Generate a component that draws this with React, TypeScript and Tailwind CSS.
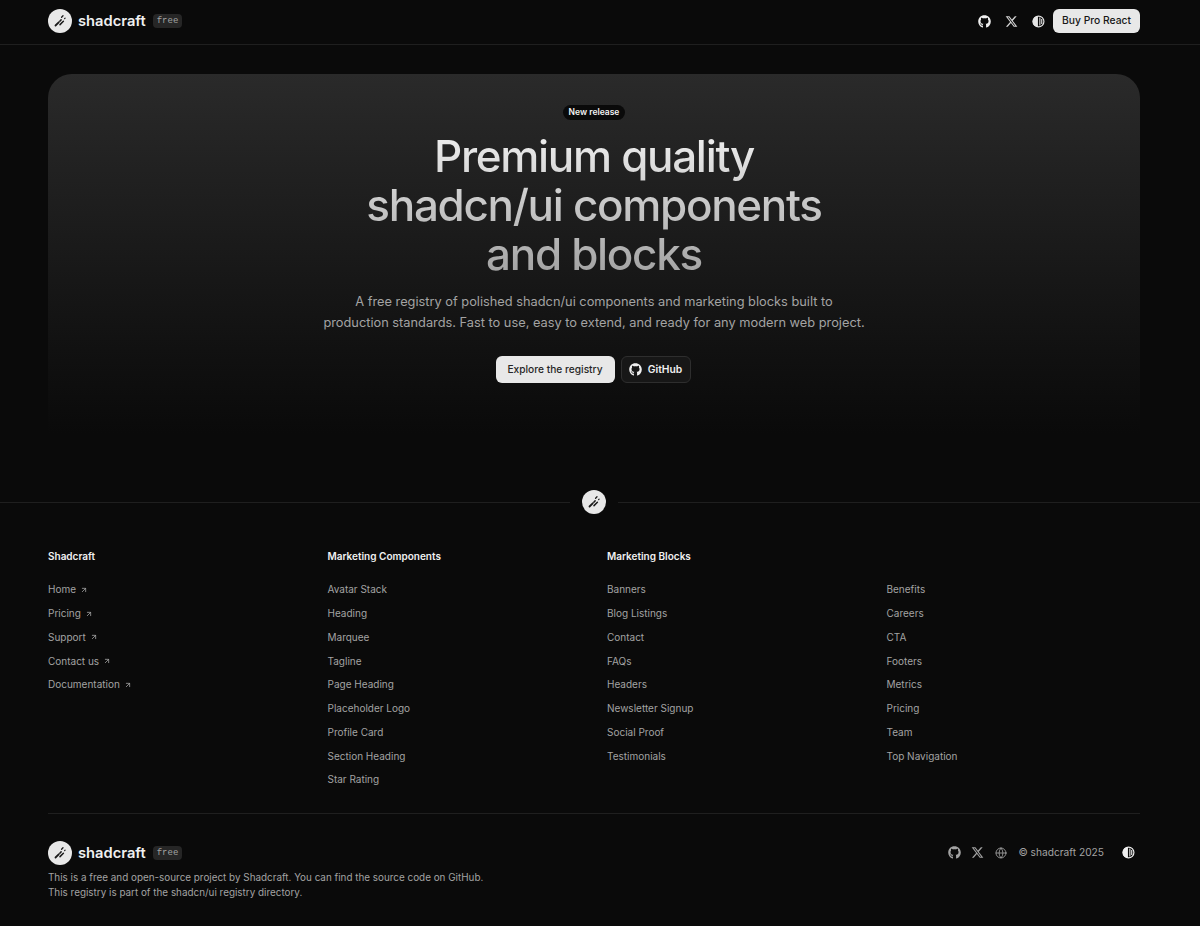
import { Globe, ArrowUpRight } from "lucide-react";
import { FaGithub } from "react-icons/fa";
import { FaXTwitter } from "react-icons/fa6";

const ThemeIcon = ({ className }: { className?: string }) => (
  <svg viewBox="0 0 24 24" fill="none" className={className}>
    <circle cx="12" cy="12" r="10" stroke="currentColor" strokeWidth="2.2" />
    <path d="M11 2a10 10 0 0 0 0 20z" fill="currentColor" />
    <path d="M14.5 4.5v15M18 7.5v9" stroke="currentColor" strokeWidth="2" />
  </svg>
);

const LogoMark = () => (
  <div className="flex h-6 w-6 shrink-0 items-center justify-center rounded-full bg-[#e8e8e8]">
    <svg viewBox="0 0 24 24" className="h-6 w-6 text-[#1a1a1a]" fill="none" stroke="currentColor" strokeLinecap="round">
      <path d="M7.5 16.5l3.2-3.2" strokeWidth="1.8" />
      <path d="M11.8 12.2l1.3-1.3" strokeWidth="1.5" />
      <path d="M12 15.6l3.4-3.4" strokeWidth="1.5" />
      <path d="M13.6 8.2l1.4-1.4" strokeWidth="1.3" />
      <path d="M16.6 9.6l.5-.5" strokeWidth="1.2" />
    </svg>
  </div>
);

const Brand = () => (
  <div className="flex items-center">
    <LogoMark />
    <span className="ml-[6px] text-[14.7px] leading-6 font-semibold text-[#f0f0f0]">shadcraft</span>
    <span className="ml-[7px] rounded-[4px] bg-[#262626] px-[4px] py-[1px] font-['Liberation_Mono',monospace] text-[9px] leading-[12px] text-[#a3a3a3]">
      free
    </span>
  </div>
);

const columns = [
  {
    title: "Shadcraft",
    external: true,
    links: ["Home", "Pricing", "Support", "Contact us", "Documentation"],
  },
  {
    title: "Marketing Components",
    links: ["Avatar Stack", "Heading", "Marquee", "Tagline", "Page Heading", "Placeholder Logo", "Profile Card", "Section Heading", "Star Rating"],
  },
  {
    title: "Marketing Blocks",
    links: ["Banners", "Blog Listings", "Contact", "FAQs", "Headers", "Newsletter Signup", "Social Proof", "Testimonials"],
  },
  {
    title: "",
    links: ["Benefits", "Careers", "CTA", "Footers", "Metrics", "Pricing", "Team", "Top Navigation"],
  },
];

export default function App() {
  return (
    <div className="min-h-screen bg-[#0a0a0a] font-['Inter',sans-serif] text-[#a3a3a3]">
      {/* Header */}
      <header className="flex h-[45px] items-center justify-between border-b border-[#1f1f1f] pr-[60px] pb-[2px] pl-12">
        <Brand />
        <div className="flex items-center">
          <FaGithub className="h-[13px] w-[13px] text-[#f0f0f0]" />
          <FaXTwitter className="ml-[14px] h-[13px] w-[13px] text-[#d4d4d4]" />
          <ThemeIcon className="ml-[14px] h-[13px] w-[13px] text-[#e5e5e5]" />
          <button className="ml-[8px] h-6 w-[87px] rounded-[6px] bg-[#e8e8e8] text-[10.3px] font-medium text-[#171717]">
            Buy Pro React
          </button>
        </div>
      </header>

      {/* Hero */}
      <section className="mt-[29px] mr-[60px] ml-12 flex h-[360px] flex-col items-center rounded-t-[24px] bg-gradient-to-b from-[#2a2a2a] to-[#0a0a0a] pt-[31px]">
        <span className="rounded-full bg-[#0a0a0a] px-[6px] py-[1px] text-[8.5px] leading-[13px] font-semibold text-[#f5f5f5]">
          New release
        </span>
        <h1 className="mt-[12px] bg-gradient-to-b from-[#f0f0f0] to-[#a0a0a0] bg-clip-text text-center text-[44px] leading-[49px] font-medium tracking-[-0.03em] text-transparent">
          Premium quality
          <br />
          shadcn/ui components
          <br />
          and blocks
        </h1>
        <p className="mt-[12px] text-center text-[12.8px] leading-[21px] text-[#a3a3a3]">
          A free registry of polished shadcn/ui components and marketing blocks built to
          <br />
          production standards. Fast to use, easy to extend, and ready for any modern web project.
        </p>
        <div className="mt-[23px] flex items-center gap-[6px] pr-[2px]">
          <button className="h-[27px] w-[119px] rounded-[6px] bg-[#e8e8e8] text-[10.2px] font-medium text-[#262626]">
            Explore the registry
          </button>
          <button className="flex h-[27px] w-[70px] items-center justify-center gap-[6px] rounded-[6px] border border-[#2e2e2e] bg-[#171717] text-[10.3px] font-semibold text-[#f0f0f0]">
            <FaGithub className="h-[13px] w-[13px]" />
            GitHub
          </button>
        </div>
      </section>

      {/* Divider */}
      <div className="mt-[56px] flex items-center">
        <div className="h-px w-[570px] bg-[#1f1f1f]" />
        <div className="mx-[12px]">
          <LogoMark />
        </div>
        <div className="h-px flex-1 bg-[#1f1f1f]" />
      </div>

      {/* Footer links */}
      <footer className="pr-[60px] pl-12">
        <div className="mt-[34px] grid grid-cols-4 gap-x-[26px] border-b border-[#1f1f1f] pb-[21px]">
          {columns.map((col, i) => (
            <div key={i}>
              <h3 className="h-4 text-[10px] leading-4 font-semibold text-[#f0f0f0]">{col.title}</h3>
              <ul className="mt-[14px]">
                {col.links.map((link) => (
                  <li key={link} className="flex h-[23.75px] items-center text-[10px] text-[#a3a3a3]">
                    {link}
                    {col.external && <ArrowUpRight className="ml-[4px] h-[8px] w-[8px]" strokeWidth={2.4} />}
                  </li>
                ))}
              </ul>
            </div>
          ))}
        </div>

        {/* Footer bottom */}
        <div className="mt-[27px] flex items-start justify-between">
          <div>
            <Brand />
            <p className="mt-[5px] text-[9.9px] leading-[15px] text-[#a3a3a3]">
              This is a free and open-source project by Shadcraft. You can find the source code on GitHub.
              <br />
              This registry is part of the shadcn/ui registry directory.
            </p>
          </div>
          <div className="flex h-6 items-center text-[#a3a3a3]">
            <FaGithub className="h-[13px] w-[13px]" />
            <FaXTwitter className="ml-[10px] h-[13px] w-[13px]" />
            <Globe className="ml-[11px] h-[12px] w-[12px]" strokeWidth={1.7} />
            <span className="ml-[11px] text-[10.2px]">© shadcraft 2025</span>
            <ThemeIcon className="mr-[5px] ml-[18px] h-[13px] w-[13px] text-[#f0f0f0]" />
          </div>
        </div>
      </footer>
    </div>
  );
}
